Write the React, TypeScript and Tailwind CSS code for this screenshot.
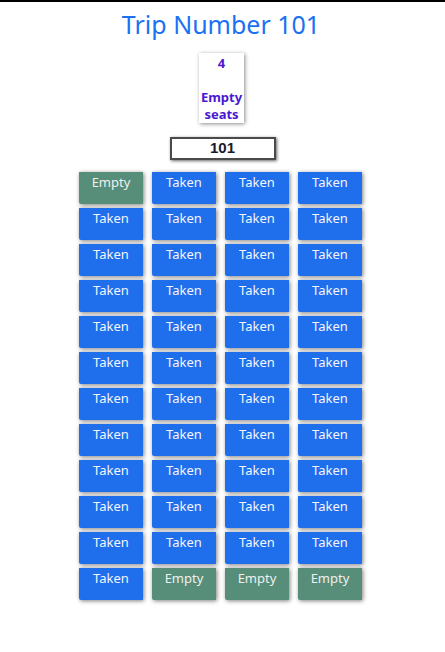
import React from "react";

const rows: string[][] = Array.from({ length: 12 }, (_, r) => {
  if (r === 0) return ["Empty", "Taken", "Taken", "Taken"];
  if (r === 11) return ["Taken", "Empty", "Empty", "Empty"];
  return ["Taken", "Taken", "Taken", "Taken"];
});

export default function App() {
  return (
    <div className="min-h-[652px] w-[445px] bg-white border-t-2 border-black font-['Noto_Sans',sans-serif]">
      <h1 className="mt-[6px] text-center text-[25px] leading-[33px] text-[#1a71f2] pr-[3px]">
        Trip Number 101
      </h1>
      <div className="mt-[12px] flex justify-center pr-[2px]">
        <div className="w-[45px] h-[70px] bg-white text-center text-[13px] leading-[17px] font-bold text-[#4a18d0] shadow-[1px_1px_4px_rgba(0,0,0,0.45)] pt-[2px]">
          <div>4</div>
          <div className="h-[17px]"></div>
          <div>Empty</div>
          <div>seats</div>
        </div>
      </div>
      <div className="mt-[14px] flex justify-center">
        <div className="w-[106px] h-[23px] bg-white border-2 border-[#4a4a4a] shadow-[1px_1px_3px_rgba(0,0,0,0.6)] flex items-center justify-center font-['Liberation_Sans',Arial,sans-serif] font-bold text-[15px] text-[#1a1a28]">
          101
        </div>
      </div>
      <div className="mt-[12px] flex justify-center pr-[4px]">
        <div className="grid grid-cols-[repeat(4,64px)] gap-x-[9px] gap-y-[4px]">
          {rows.flat().map((s, i) => (
            <div
              key={i}
              className={
                s === "Empty"
                  ? "h-[32px] rounded-bl-[2px] bg-[#568e79] text-center text-[13px] leading-[21px] text-[#f0f0f0] shadow-[1px_1px_4px_rgba(0,0,0,0.5)]"
                  : "h-[32px] rounded-bl-[2px] bg-[#1f6fec] text-center text-[13px] leading-[21px] text-[#f4f4ff] shadow-[1px_1px_4px_rgba(0,0,0,0.5)]"
              }
            >
              {s}
            </div>
          ))}
        </div>
      </div>
    </div>
  );
}
